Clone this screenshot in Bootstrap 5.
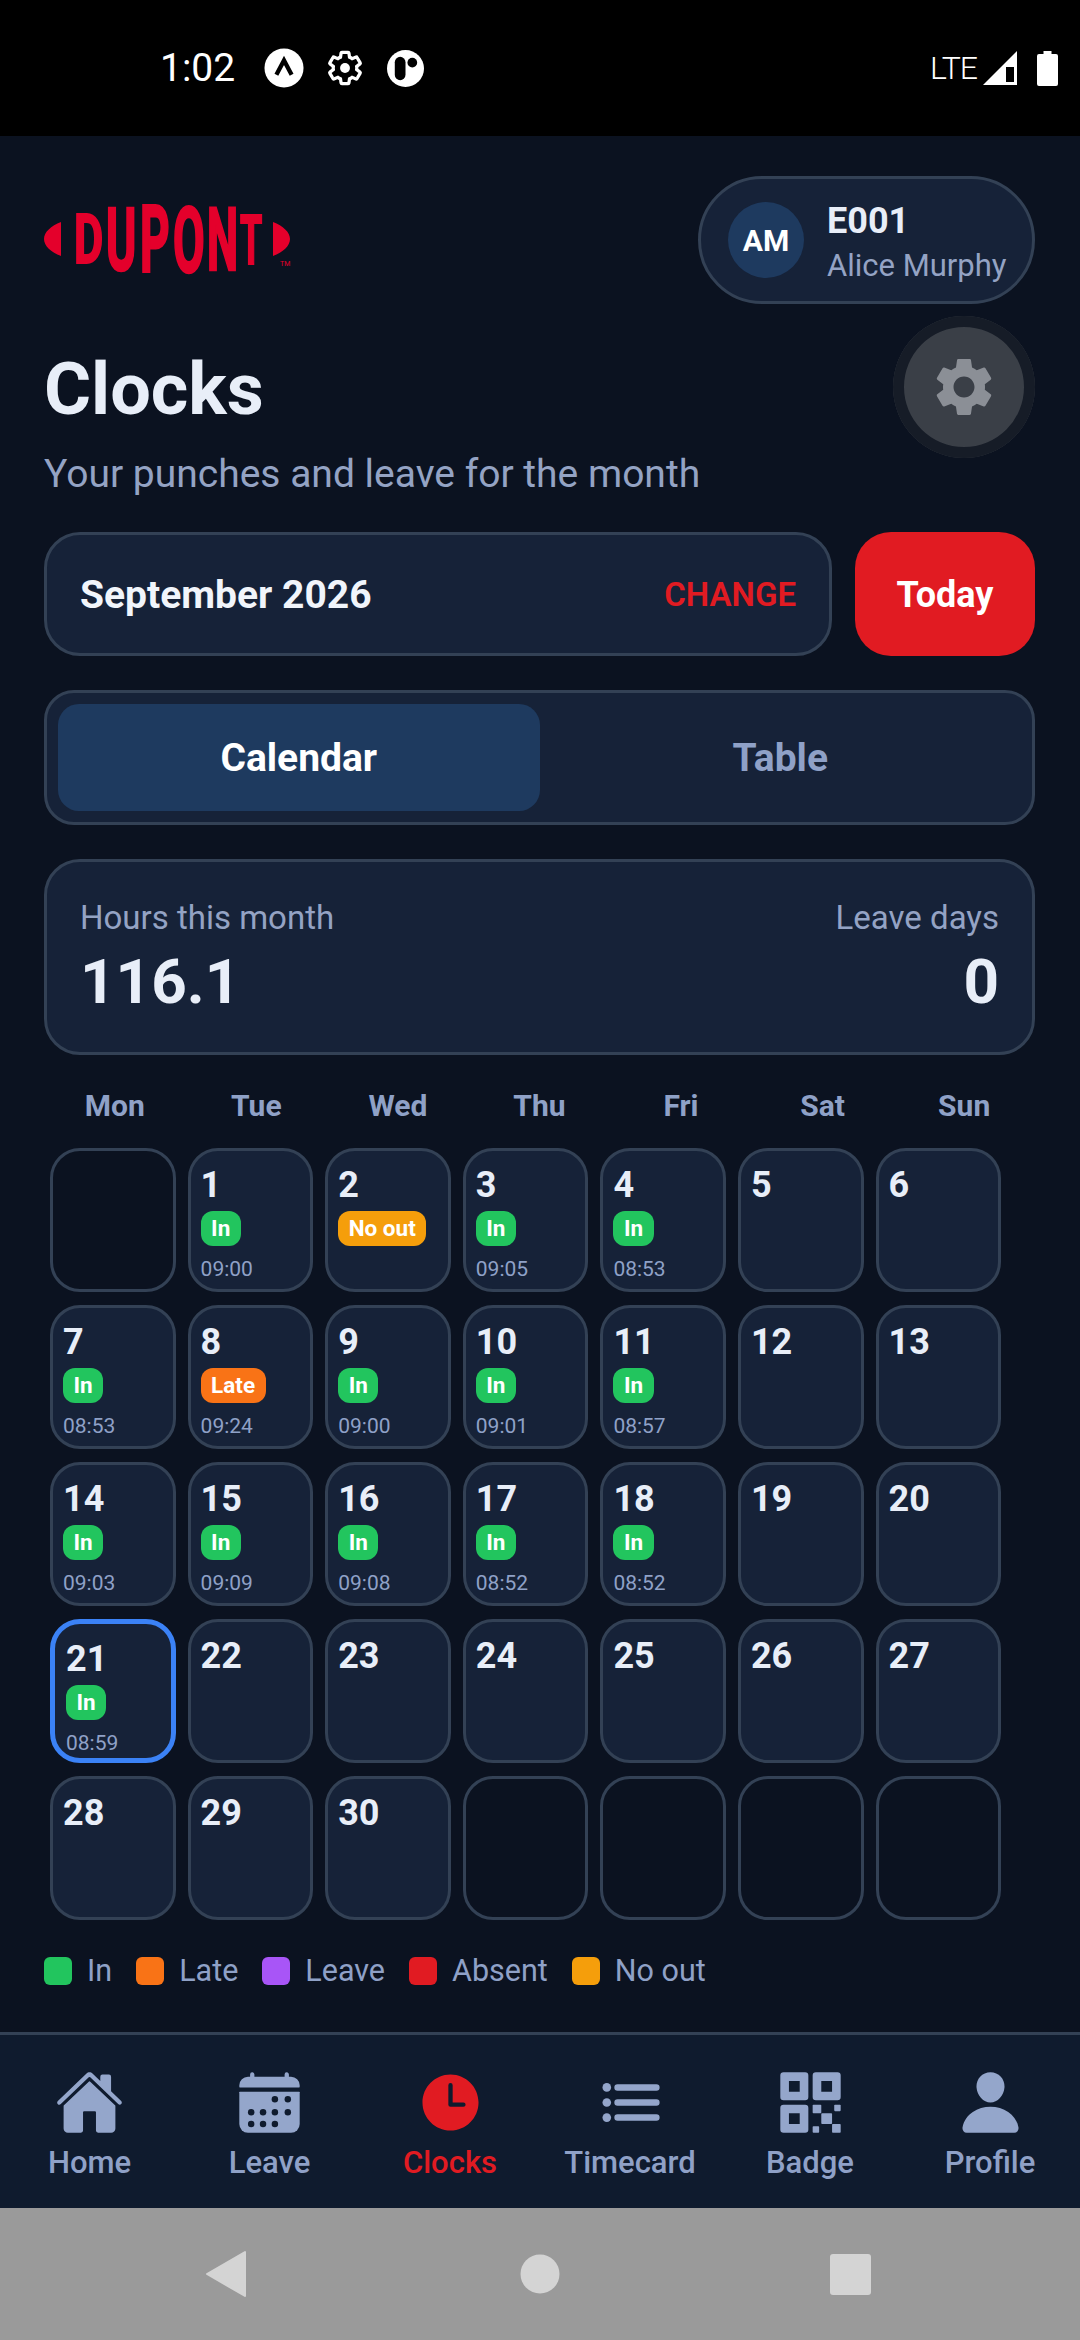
<!DOCTYPE html>
<html lang="en">
<head>
  <meta charset="UTF-8" />
  <meta name="viewport" content="width=device-width, initial-scale=1.0"/>
  <title>Clocks</title>
  <link href="https://cdn.jsdelivr.net/npm/bootstrap@5.3.3/dist/css/bootstrap.min.css" rel="stylesheet">
  <style>
    html, body { width: 1080px; height: 2340px; overflow: hidden; }
    body {
      background: #0b1220;
      color: #e8eef8;
      font-family: Roboto, "Liberation Sans", sans-serif;
      display: flex;
      flex-direction: column;
      position: relative;
    }
    .status-bar { height: 136px; background: #000; color: #fff; padding: 48px 22px 0 160px; flex: none; }
    .status-time { font-size: 39px; line-height: 40px; width: 103px; }
    .status-a { margin-right: 22px; }
    .status-g { margin: 2px 24px 0 0; }
    .status-p { margin-top: 2px; }
    .status-lte { font-size: 32px; line-height: 40px; margin: 0 6px 0 auto; font-weight: 300; letter-spacing: -1px; }
    .status-sig { margin: 3px 20px 0 0; }
    .status-bat { margin-top: 3px; }
    .page-main { flex: 1; padding: 40px 45px 0 44px; }

    .logo-svg { overflow: visible; }
    .who-pill {
      width: 337px; height: 128px;
      background: #162238; border: 3px solid #334155; border-radius: 64px;
      padding: 0 0 0 27px; gap: 23px;
    }
    .who-avatar {
      width: 76px; height: 76px; border-radius: 50%;
      background: #1e3a5f; color: #fff; font-weight: 700; font-size: 30px;
    }
    .who-id { font-size: 36px; line-height: 42px; font-weight: 700; margin-top: 6px; }
    .who-name { font-size: 31px; line-height: 42px; color: #94a3c4; margin-top: 3px; }
    .gear-fab {
      position: absolute; left: 893px; top: 316px;
      width: 142px; height: 142px; border-radius: 50%;
      background: #3a3f47; box-shadow: inset 0 0 0 11px #161c27;
    }
    .page-title { font-size: 72px; line-height: 84px; font-weight: 700; margin: 44px 0 0; color: #e8eef8; }
    .page-sub { font-size: 39px; line-height: 48px; color: #94a3c4; margin: 18px 0 0; }

    .month-row { gap: 23px; margin-top: 34px; }
    .month-box {
      height: 124px; background: #162238; border: 3px solid #334155; border-radius: 36px;
      padding: 2px 33px 0;
    }
    .month-label { font-size: 39px; font-weight: 700; color: #f1f5fb; }
    .month-change { font-size: 33px; font-weight: 600; color: #e11b22; }
    .btn-today {
      width: 180px; height: 124px; background: #e11b22; color: #fff; border: 0; border-radius: 36px;
      font-size: 36px; font-weight: 700; padding: 2px 0 0;
    }
    .seg-box {
      height: 135px; margin-top: 34px; background: #162238;
      border: 3px solid #334155; border-radius: 30px; padding: 11px;
    }
    .seg-item { width: 50%; border-radius: 21px; font-size: 39px; font-weight: 700; color: #8fa1c7; padding-top: 2px; }
    .seg-on { background: #1e3a5f; color: #fff; }
    .stat-box {
      height: 196px; margin-top: 34px; background: #162238;
      border: 3px solid #334155; border-radius: 36px; padding: 34px 33px 0;
    }
    .stat-cap { font-size: 33px; line-height: 44px; color: #94a3c4; }
    .stat-num { font-size: 62px; line-height: 72px; font-weight: 700; color: #e8eef8; margin-top: 6px; }

    .day-heads { margin-top: 29px; height: 44px; }
    .day-head { width: 14.2857%; text-align: center; font-size: 30px; font-weight: 700; color: #8fa1c7; line-height: 44px; }
    .cal-grid {
      display: grid; grid-template-columns: repeat(7, 125.6px); grid-auto-rows: 144px;
      column-gap: 12px; row-gap: 13px; margin: 20px 0 0 6px;
    }
    .cal-cell { background: #162238; border: 3px solid #334155; border-radius: 30px; padding: 16px 10px 0; }
    .cal-empty { background: #0b1220; }
    .cal-today { border: 5px solid #3b82f6; padding: 17px 8px 0 11px; }
    .cal-num { font-size: 36px; line-height: 36px; font-weight: 700; color: #e8eef8; }
    .cal-tag {
      display: inline-block; height: 35px; line-height: 35px; padding: 0 10.500px; margin-top: 8px;
      border-radius: 12px; color: #fff; font-size: 22.500px; font-weight: 700; vertical-align: top;
    }
    .cal-time { font-size: 21px; line-height: 24px; color: #8fa1c7; margin-top: 11px; }
    .bg-in { background: #22c55e; }
    .bg-late { background: #f97316; }
    .bg-leave { background: #a855f7; }
    .bg-absent { background: #e11b22; }
    .bg-noout { background: #f59e0b; }

    .legend-row { margin-top: 33px; gap: 24px; }
    .legend-swatch { width: 28px; height: 28px; border-radius: 6px; }
    .legend-item { gap: 15px; font-size: 30.500px; line-height: 36px; color: #8fa1c7; }

    .tab-bar { flex: none; height: 176px; background: #0f1b2e; border-top: 3px solid #334155; }
    .tab-item {
      position: absolute; top: 2068px; width: 200px; margin-left: -100px;
      font-size: 31px; font-weight: 500; line-height: 36px; color: #8fa1c7; text-align: center;
    }
    .tab-item svg { width: 69px; height: 69px; fill: #94a6cb; stroke: #94a6cb; display: block; margin: 0 auto 8px; stroke-width: 0; }
    .tab-on { color: #e11b22; }
    .tab-on svg { fill: #e11b22; stroke: #e11b22; }
    .sys-nav { flex: none; height: 132px; background: #9a9a9a; }
  </style>
</head>
<body>
  <div class="status-bar d-flex align-items-start">
    <div class="status-time">1:02</div>
    <svg class="status-a" width="42" height="40" viewBox="0 0 42 42"><circle cx="21" cy="21" r="20.5" fill="#fff"/><path d="M13 28 21 13l8 15" fill="none" stroke="#000" stroke-width="4.5"/></svg>
    <svg class="status-g" width="36" height="36" viewBox="1 1 22 22" fill="none" stroke="#fff" stroke-width="2"><path d="M19.14 12.94c.04-.3.06-.61.06-.94 0-.32-.02-.64-.07-.94l2.03-1.58c.18-.14.23-.41.12-.61l-1.92-3.32c-.12-.22-.37-.29-.59-.22l-2.39.96c-.5-.38-1.03-.7-1.62-.94l-.36-2.54c-.04-.24-.24-.41-.48-.41h-3.84c-.24 0-.43.17-.47.41l-.36 2.54c-.59.24-1.13.57-1.62.94l-2.39-.96c-.22-.08-.47 0-.59.22L2.74 8.87c-.12.21-.08.47.12.61l2.03 1.58c-.05.3-.09.63-.09.94s.02.64.07.94l-2.03 1.58c-.18.14-.23.41-.12.61l1.92 3.32c.12.22.37.29.59.22l2.39-.96c.5.38 1.03.7 1.62.94l.36 2.54c.05.24.24.41.48.41h3.84c.24 0 .44-.17.47-.41l.36-2.54c.59-.24 1.13-.56 1.62-.94l2.39.96c.22.08.47 0 .59-.22l1.92-3.32c.12-.22.07-.47-.12-.61z"/><circle cx="12" cy="12" r="3" fill="#fff" stroke="none"/></svg>
    <svg class="status-p" width="37" height="37" viewBox="0 0 38 38"><circle cx="19" cy="19" r="19" fill="#fff"/><rect x="8" y="7" width="11" height="24" rx="5.5" fill="#000"/><circle cx="26" cy="13" r="5" fill="#000"/></svg>
    <div class="status-lte">LTE</div>
    <svg class="status-sig" width="34" height="34" viewBox="0 0 34 34"><path d="M34 0v34H0z" fill="#fff"/><path d="M23 16h8v15h-8z" fill="#000"/></svg>
    <svg class="status-bat" width="21" height="35" viewBox="0 0 21 35"><path d="M6.500 0h8v3h4.500a2 2 0 0 1 2 2v28a2 2 0 0 1-2 2H2a2 2 0 0 1-2-2V5a2 2 0 0 1 2-2h4.500z" fill="#fff"/></svg>
  </div>

  <div class="page-main">
    <div class="d-flex justify-content-between align-items-center">
      <svg class="logo-svg" width="250" height="72" viewBox="44 204 250 72" aria-label="DuPont">
        <g fill="#e4002b" stroke="#e4002b" stroke-width="0" font-family="Roboto, sans-serif" font-weight="700" font-size="100">
          <path d="M61 222v34c-10-4-17-10-17-17s7-13 17-17zM273 222v34c10-4 17-10 17-17s-7-13-17-17z"/>
          <g stroke-width="3">
            <text transform="translate(74 263) scale(.45 .68)">D</text>
            <text transform="translate(106 270) scale(.46 .865)">U</text>
            <text transform="translate(140 272) scale(.46 .92)">P</text>
            <text transform="translate(173 272) scale(.46 .9)">O</text>
            <text transform="translate(207 270) scale(.44 .865)">N</text>
            <text transform="translate(240 264) scale(.36 .69)">T</text>
          </g>
          <text x="280" y="266" font-size="7" font-weight="400">TM</text>
        </g>
      </svg>
      <div class="who-pill d-flex align-items-center">
        <div class="who-avatar d-flex align-items-center justify-content-center flex-shrink-0">AM</div>
        <div>
          <div class="who-id">E001</div>
          <div class="who-name">Alice Murphy</div>
        </div>
      </div>
    </div>

    <h1 class="page-title">Clocks</h1>
    <p class="page-sub">Your punches and leave for the month</p>

    <div class="month-row d-flex">
      <div class="month-box d-flex flex-grow-1 align-items-center justify-content-between">
        <span class="month-label">September 2026</span>
        <span class="month-change">CHANGE</span>
      </div>
      <button class="btn btn-today flex-shrink-0" type="button">Today</button>
    </div>

    <div class="seg-box d-flex">
      <div class="seg-item seg-on d-flex align-items-center justify-content-center">Calendar</div>
      <div class="seg-item d-flex align-items-center justify-content-center">Table</div>
    </div>

    <div class="stat-box d-flex justify-content-between">
      <div>
        <div class="stat-cap">Hours this month</div>
        <div class="stat-num">116.1</div>
      </div>
      <div class="text-end">
        <div class="stat-cap">Leave days</div>
        <div class="stat-num">0</div>
      </div>
    </div>

    <div class="day-heads d-flex">
      <div class="day-head">Mon</div><div class="day-head">Tue</div><div class="day-head">Wed</div><div class="day-head">Thu</div><div class="day-head">Fri</div><div class="day-head">Sat</div><div class="day-head">Sun</div>
    </div>
    <div class="cal-grid" id="calGrid"></div>

    <div class="legend-row d-flex align-items-center">
      <div class="legend-item d-flex align-items-center"><span class="legend-swatch bg-in"></span>In</div>
      <div class="legend-item d-flex align-items-center"><span class="legend-swatch bg-late"></span>Late</div>
      <div class="legend-item d-flex align-items-center"><span class="legend-swatch bg-leave"></span>Leave</div>
      <div class="legend-item d-flex align-items-center"><span class="legend-swatch bg-absent"></span>Absent</div>
      <div class="legend-item d-flex align-items-center"><span class="legend-swatch bg-noout"></span>No out</div>
    </div>
  </div>

  <button class="gear-fab btn p-0 border-0 d-flex align-items-center justify-content-center" type="button" aria-label="Settings">
    <svg width="70" height="70" viewBox="0 0 24 24" fill="#8b8f96"><path d="M19.14 12.94c.04-.3.06-.61.06-.94 0-.32-.02-.64-.07-.94l2.03-1.58c.18-.14.23-.41.12-.61l-1.92-3.32c-.12-.22-.37-.29-.59-.22l-2.39.96c-.5-.38-1.03-.7-1.62-.94l-.36-2.54c-.04-.24-.24-.41-.48-.41h-3.84c-.24 0-.43.17-.47.41l-.36 2.54c-.59.24-1.13.57-1.62.94l-2.39-.96c-.22-.08-.47 0-.59.22L2.74 8.87c-.12.21-.08.47.12.61l2.03 1.58c-.05.3-.09.63-.09.94s.02.64.07.94l-2.03 1.58c-.18.14-.23.41-.12.61l1.92 3.32c.12.22.37.29.59.22l2.39-.96c.5.38 1.03.7 1.62.94l.36 2.54c.05.24.24.41.48.41h3.84c.24 0 .44-.17.47-.41l.36-2.54c.59-.24 1.13-.56 1.62-.94l2.39.96c.22.08.47 0 .59-.22l1.92-3.32c.12-.22.07-.47-.12-.61l-2.01-1.58zM12 15.6c-1.98 0-3.6-1.62-3.6-3.6s1.62-3.6 3.6-3.6 3.6 1.62 3.6 3.6-1.62 3.6-3.6 3.6z"/></svg>
  </button>

  <div class="tab-bar"></div>
  <div class="tab-item" style="left:89.5px">
    <svg viewBox="0 0 512 512"><path d="M261.56 101.28a8 8 0 00-11.06 0L66.4 277.15a8 8 0 00-2.47 5.79L63.9 448a32 32 0 0032 32H192a16 16 0 0016-16V328a8 8 0 018-8h80a8 8 0 018 8v136a16 16 0 0016 16h96.06a32 32 0 0032-32V282.94a8 8 0 00-2.47-5.79z"/><path d="M490.91 244.15l-74.8-71.56V64a16 16 0 00-16-16h-48a16 16 0 00-16 16v32l-57.92-55.38C272.77 35.14 264.71 32 256 32c-8.68 0-16.72 3.14-22.14 8.63l-212.7 203.5c-6.22 6-7 15.87-1.34 22.37A16 16 0 0043 267.56L250.5 69.28a8 8 0 0111.06 0l207.52 198.28a16 16 0 0022.59-.44c6.14-6.36 5.63-16.86-.76-22.97z"/></svg>
    Home
  </div>
  <div class="tab-item" style="left:269.5px">
    <svg viewBox="0 0 512 512"><path d="M480 128a64 64 0 00-64-64h-16V48.45c0-8.61-6.62-16-15.23-16.43A16 16 0 00368 48v16H144V48.45c0-8.61-6.62-16-15.23-16.43A16 16 0 00112 48v16H96a64 64 0 00-64 64v12a4 4 0 004 4h440a4 4 0 004-4z"/><path d="M32 416a64 64 0 0064 64h320a64 64 0 0064-64V180a4 4 0 00-4-4H36a4 4 0 00-4 4z"/><g fill="#0f1b2e"><circle cx="296" cy="232" r="24"/><circle cx="392" cy="232" r="24"/><circle cx="120" cy="328" r="24"/><circle cx="208" cy="328" r="24"/><circle cx="296" cy="328" r="24"/><circle cx="392" cy="328" r="24"/><circle cx="120" cy="416" r="24"/><circle cx="208" cy="416" r="24"/><circle cx="296" cy="416" r="24"/></g></svg>
    Leave
  </div>
  <div class="tab-item tab-on" style="left:450px">
    <svg viewBox="0 0 512 512"><path d="M256 48C141.13 48 48 141.13 48 256s93.13 208 208 208 208-93.13 208-208S370.87 48 256 48zm96 240h-96a16 16 0 01-16-16V128a16 16 0 0132 0v128h80a16 16 0 010 32z"/></svg>
    Clocks
  </div>
  <div class="tab-item" style="left:630px">
    <svg viewBox="0 0 512 512"><path fill="none" style="stroke-width:48" stroke-linecap="round" d="M160 144h288M160 256h288M160 368h288"/><circle cx="80" cy="144" r="32"/><circle cx="80" cy="256" r="32"/><circle cx="80" cy="368" r="32"/></svg>
    Timecard
  </div>
  <div class="tab-item" style="left:810px">
    <svg viewBox="0 0 512 512"><path fill-rule="evenodd" d="M56 32h160a24 24 0 0124 24v160a24 24 0 01-24 24H56a24 24 0 01-24-24V56a24 24 0 0124-24zM96 96v80h80V96zM296 32h160a24 24 0 0124 24v160a24 24 0 01-24 24H296a24 24 0 01-24-24V56a24 24 0 0124-24zM336 96v80h80V96zM56 272h160a24 24 0 0124 24v160a24 24 0 01-24 24H56a24 24 0 01-24-24V296a24 24 0 0124-24zM96 336v80h80v-80z"/><rect x="336" y="336" width="80" height="80" rx="6"/><rect x="272" y="272" width="64" height="64" rx="6"/><rect x="416" y="416" width="64" height="64" rx="6"/><rect x="432" y="272" width="48" height="48" rx="6"/><rect x="272" y="432" width="48" height="48" rx="6"/></svg>
    Badge
  </div>
  <div class="tab-item" style="left:990px">
    <svg viewBox="0 0 512 512"><path d="M332.64 64.58C313.18 43.57 286 32 256 32c-30.16 0-57.43 11.5-76.8 32.38-19.58 21.11-29.12 49.8-26.88 80.78C156.76 206.28 203.27 256 256 256s99.16-49.71 103.67-110.82c2.27-30.7-7.33-59.33-27.03-80.6zM432 480H80a31 31 0 01-24.2-11.13c-6.5-7.77-9.12-18.38-7.18-29.11C57.06 392.94 83.4 353.61 124.8 326c36.78-24.51 83.37-38 131.2-38s94.42 13.5 131.2 38c41.4 27.6 67.74 66.93 76.18 113.75 1.94 10.73-.68 21.34-7.18 29.11A31 31 0 01432 480z"/></svg>
    Profile
  </div>

  <div class="sys-nav d-flex align-items-center justify-content-center">
    <svg width="1080" height="132" viewBox="0 0 1080 132"><path d="M245 44v44l-38-22z" fill="#d4d4d4" stroke="#d4d4d4" stroke-width="2" stroke-linejoin="round"/><circle cx="540" cy="66" r="19.5" fill="#d4d4d4"/><rect x="830" y="46" width="41" height="41" rx="3" fill="#d4d4d4"/></svg>
  </div>

  <script>
    // tag + punch time per day of month, blank days are weekends / no data
    const IN = 'In', LATE = 'Late', NOOUT = 'No out';
    const DAYS = {
      1: [IN, '09:00'], 2: [NOOUT, ''], 3: [IN, '09:05'], 4: [IN, '08:53'],
      7: [IN, '08:53'], 8: [LATE, '09:24'], 9: [IN, '09:00'], 10: [IN, '09:01'], 11: [IN, '08:57'],
      14: [IN, '09:03'], 15: [IN, '09:09'], 16: [IN, '09:08'], 17: [IN, '08:52'], 18: [IN, '08:52'],
      21: [IN, '08:59']
    };
    const TAG_CLASS = { 'In': 'bg-in', 'Late': 'bg-late', 'No out': 'bg-noout' };
    let html = '<div class="cal-cell cal-empty"></div>';
    for (let d = 1; d <= 30; d++) {
      const info = DAYS[d];
      html += `<div class="cal-cell${d === 21 ? ' cal-today' : ''}"><div class="cal-num">${d}</div>`;
      if (info) {
        html += `<span class="cal-tag ${TAG_CLASS[info[0]]}">${info[0]}</span>`;
        if (info[1]) html += `<div class="cal-time">${info[1]}</div>`;
      }
      html += '</div>';
    }
    for (let i = 0; i < 4; i++) html += '<div class="cal-cell cal-empty"></div>';
    document.getElementById('calGrid').innerHTML = html;
  </script>
</body>
</html>
